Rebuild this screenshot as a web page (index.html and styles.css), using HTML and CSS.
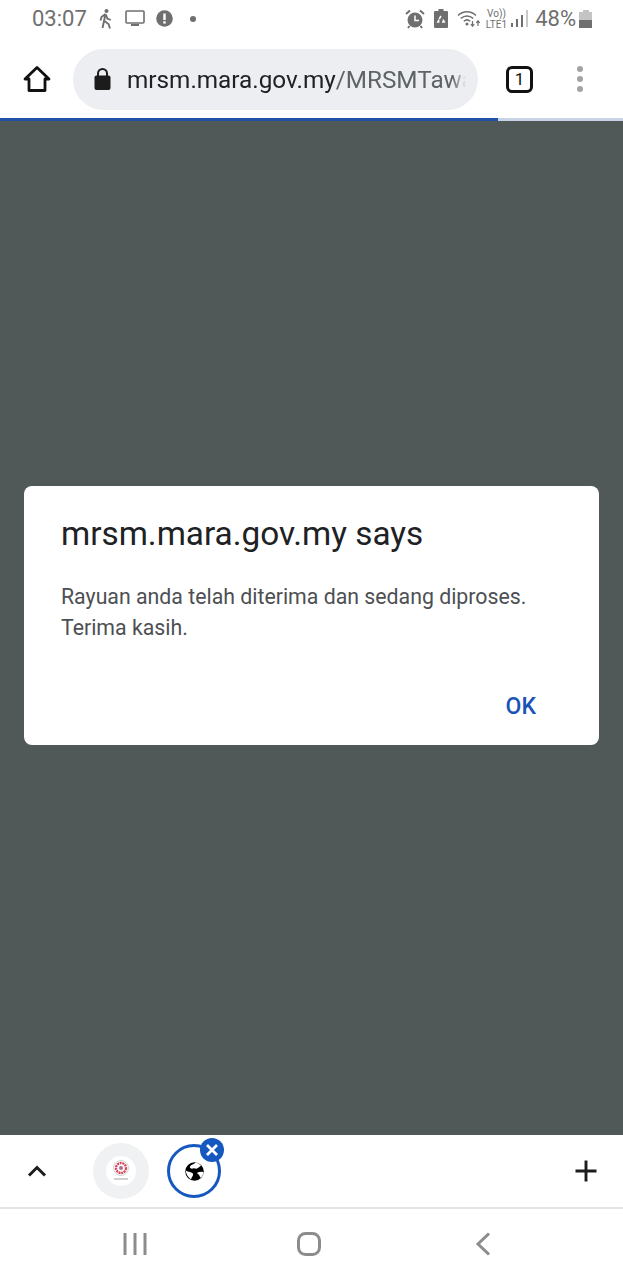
FILE: index.html
```html
<!DOCTYPE html>
<html lang="en">
<head>
  <meta charset="UTF-8">
  <title>mrsm.mara.gov.my</title>
  <link rel="stylesheet" href="styles.css">
</head>
<body>

  <div class="status">
    <div class="status-left">
      <span class="clock">03:07</span>
      <svg class="walk" width="16" height="22" viewBox="0 0 16 22"><circle cx="8.500" cy="3" r="2" fill="#6f6f6f"/><path d="M7.500 6 4.500 20M7.500 6l-4 3-1 3.500M7.800 6.500l1.500 4 3.500 1.500M6.500 13l4 3 1.500 4.500" fill="none" stroke="#6f6f6f" stroke-width="1.900"/></svg>
      <svg class="screen" width="20" height="17" viewBox="0 0 20 17"><rect x="1" y="1" width="18" height="12" rx="1" fill="none" stroke="#6f6f6f" stroke-width="1.600"/><rect x="6" y="14" width="8" height="2" fill="#6f6f6f"/></svg>
      <svg class="alert" width="17" height="17" viewBox="0 0 17 17"><circle cx="8.500" cy="8.500" r="8.300" fill="#6f6f6f"/><rect x="7.300" y="3.500" width="2.400" height="6.500" fill="#fff"/><rect x="7.300" y="11.200" width="2.400" height="2.400" fill="#fff"/></svg>
      <span class="dot"></span>
    </div>
    <div class="status-right">
      <svg width="20" height="20" viewBox="0 0 20 20"><circle cx="10" cy="11" r="7.500" fill="#6f6f6f"/><path d="M10 6.500V11.500H14" fill="none" stroke="#fff" stroke-width="1.500"/><path d="M1 5 5 1.500M19 5 15 1.500M4.500 17 3 19M15.500 17 17 19" stroke="#6f6f6f" stroke-width="2"/></svg>
      <svg class="saver" width="14" height="19" viewBox="0 0 14 19"><path d="M4.500 0h5v2H13a1 1 0 0 1 1 1v15a1 1 0 0 1-1 1H1a1 1 0 0 1-1-1V3a1 1 0 0 1 1-1h3.500z" fill="#6f6f6f"/><path d="M7 7 5.200 10M9 10.500l1.300 2.500H8M5.500 13H3.800l1.300-2.300" fill="none" stroke="#fff" stroke-width="1.500"/></svg>
      <svg class="wifi" width="25" height="19" viewBox="0 0 25 19"><path d="M1 6.500C6 1.500 14 1.500 19 6.500M3.800 9.500C7.500 6 12.500 6 16.200 9.500M6.800 12.300c2-1.800 4.400-1.800 6.400 0" fill="none" stroke="#6f6f6f" stroke-width="1.500"/><circle cx="10" cy="15" r="1.500" fill="#6f6f6f"/><path d="M15.500 12v5M13.800 15l1.700 2.200 1.700-2.200M21 17v-5M19.300 14l1.700-2.200 1.700 2.200" fill="none" stroke="#6f6f6f" stroke-width="1.200"/></svg>
      <span class="volte">Vo))<br>LTE1</span>
      <span class="signal">
        <i class="bar bar-1"></i>
        <i class="bar bar-2"></i>
        <i class="bar bar-3"></i>
        <i class="bar bar-4"></i>
      </span>
      <span class="percent">48%</span>
      <span class="battery"><i class="battery-cap"></i><i class="battery-body"><i class="battery-fill"></i></i></span>
    </div>
  </div>

  <div class="toolbar">
    <svg class="home" width="28" height="28" viewBox="0 0 28 28"><path d="M14 2.500 2 14h4v11.500h16V14h4z" fill="none" stroke="#111" stroke-width="2.800" stroke-linejoin="round"/></svg>
    <div class="omnibox">
      <svg class="lock" width="17" height="23" viewBox="0 0 17 23"><path d="M4 8V5.500a4.500 4.500 0 0 1 9 0V8" fill="none" stroke="#1c1c1c" stroke-width="2"/><rect x="0.500" y="7.500" width="16" height="14.500" rx="2" fill="#1c1c1c"/></svg>
      <span class="url"><span class="host">mrsm.mara.gov.my</span>/MRSMTawaran</span>
    </div>
    <div class="tab-count">1</div>
    <div class="menu"><i></i><i></i><i></i></div>
  </div>
  <div class="progress"><div class="progress-done"></div></div>

  <div class="scrim">
    <div class="dialog">
      <h1>mrsm.mara.gov.my says</h1>
      <p>Rayuan anda telah diterima dan sedang diproses.<br>Terima kasih.</p>
      <div class="actions"><button>OK</button></div>
    </div>
  </div>

  <div class="tabstrip">
    <svg class="chevron" width="20" height="12" viewBox="0 0 20 12"><path d="M2 10.500 10 2.500l8 8" fill="none" stroke="#1c1c1c" stroke-width="3"/></svg>
    <div class="tab tab-site">
      <span class="favicon">
        <svg width="20" height="22" viewBox="0 0 20 22"><circle cx="10" cy="8" r="7.500" fill="none" stroke="#d4d4d4" stroke-width="1"/><circle cx="10" cy="8" r="5" fill="none" stroke="#d8495f" stroke-width="2.400" stroke-dasharray="2 0.700"/><circle cx="10" cy="8" r="2" fill="#a8708c"/><rect x="3" y="18" width="14" height="2" fill="#d0d0d0"/></svg>
      </span>
    </div>
    <div class="tab tab-active">
      <svg width="19" height="19" viewBox="0 0 19 19"><circle cx="9.500" cy="9.500" r="9.300" fill="#000"/><path d="M10.500 0.500C9 2.500 6 2.500 5 4.500 4.200 6.200 6.500 7 8 6.500 9.500 6 10.800 7 12 6.500c1.800-.8 3-2 4-3-1.500-1.600-3.500-2.700-5.500-3zM0.600 8.500C1 12 3 15 6 17.500 6.500 15 8.500 14 8 12 7.500 10 3 10 .6 8.500zM12.500 10.500c1.800-.8 4.500-.8 6.100-.3-.3 2.500-1.400 4.300-3 5.600-1-1-1-2.500-2-3.300-.8-.7-1.800-1.500-1.100-2z" fill="#fff"/></svg>
      <span class="tab-close">
        <svg width="14" height="14" viewBox="0 0 14 14"><path d="M2 2l10 10M12 2 2 12" stroke="#fff" stroke-width="2.800"/></svg>
      </span>
    </div>
    <svg class="plus" width="22" height="22" viewBox="0 0 22 22"><path d="M11 0.500v21M0.500 11h21" stroke="#1c1c1c" stroke-width="2.900"/></svg>
  </div>

  <div class="navbar">
    <svg class="nav-recent" width="24" height="22" viewBox="0 0 24 22"><path d="M2 0v22M12 0v22M22 0v22" stroke="#8c8c8c" stroke-width="3"/></svg>
    <svg class="nav-home" width="24" height="24" viewBox="0 0 24 24"><rect x="1.500" y="1.500" width="21" height="21" rx="7" fill="none" stroke="#8c8c8c" stroke-width="3"/></svg>
    <svg class="nav-back" width="16" height="24" viewBox="0 0 16 24"><path d="M14 1.500 3 12l11 10.500" fill="none" stroke="#8c8c8c" stroke-width="3"/></svg>
  </div>

</body>
</html>
```

FILE: styles.css
```css
* {
  box-sizing: border-box;
}
html, body {
  margin: 0;
  height: 100%;
}
body {
  width: 623px;
  height: 1280px;
  overflow: hidden;
  display: flex;
  flex-direction: column;
  background: #fff;
  font-family: Roboto, Arial, sans-serif;
}
svg {
  display: block;
  flex: none;
}

/* status bar */
.status {
  height: 36px;
  flex: none;
  display: flex;
  justify-content: space-between;
  align-items: center;
  padding: 1px 31px 0 32px;
  color: #6f6f6f;
}
.status-left,
.status-right {
  display: flex;
  align-items: center;
}
.clock {
  font-size: 22px;
  margin-right: 11px;
}
.screen {
  margin-left: 11px;
}
.alert {
  margin-left: 11px;
}
.dot {
  width: 6px;
  height: 6px;
  border-radius: 50%;
  background: #6f6f6f;
  margin-left: 17px;
}
.saver {
  margin-left: 9px;
}
.wifi {
  margin-left: 9px;
}
.volte {
  font-size: 10px;
  line-height: 11px;
  margin-left: 4px;
  text-align: center;
}
.signal {
  display: flex;
  align-items: flex-end;
  gap: 3px;
  height: 17px;
  margin-left: 4px;
}
.bar {
  width: 2px;
  background: #6f6f6f;
}
.bar-1 { height: 4px; }
.bar-2 { height: 8px; }
.bar-3 { height: 12px; }
.bar-4 { height: 17px; background: #c8c8c8; }
.percent {
  font-size: 22px;
  margin-left: 7px;
}
.battery {
  display: flex;
  flex-direction: column;
  align-items: center;
  margin-left: 3px;
}
.battery-cap {
  width: 6px;
  height: 2px;
  background: #c4c4c4;
}
.battery-body {
  width: 13px;
  height: 16px;
  background: #c4c4c4;
  display: flex;
  align-items: flex-end;
}
.battery-fill {
  width: 100%;
  height: 8px;
  background: #6f6f6f;
}

/* browser toolbar */
.toolbar {
  height: 82px;
  flex: none;
  display: flex;
  align-items: center;
  padding: 4px 0 0 23px;
}
.omnibox {
  width: 405px;
  height: 61px;
  margin-left: 22px;
  padding: 0 12px 0 21px;
  border-radius: 31px;
  background: #eceef1;
  display: flex;
  align-items: center;
  overflow: hidden;
}
.url {
  margin-left: 16px;
  font-size: 24.300px;
  color: #5f6368;
  white-space: nowrap;
  overflow: hidden;
  -webkit-mask-image: linear-gradient(to right, #000 96%, transparent);
  mask-image: linear-gradient(to right, #000 96%, transparent);
}
.host {
  color: #202124;
}
.tab-count {
  width: 27px;
  height: 27px;
  margin-left: 28px;
  border: 3px solid #111;
  border-radius: 6px;
  font-size: 17px;
  color: #111;
  display: flex;
  align-items: center;
  justify-content: center;
}
.menu {
  margin-left: 44px;
  display: flex;
  flex-direction: column;
  gap: 4px;
}
.menu i {
  width: 6px;
  height: 6px;
  border-radius: 50%;
  background: #a3a3a3;
}
.progress {
  height: 3px;
  flex: none;
  background: #c9d3e6;
}
.progress-done {
  width: 498px;
  height: 100%;
  background: #1f52a5;
}

/* js alert */
.scrim {
  height: 1014px;
  flex: none;
  background: #505957;
  padding: 365px 24px 0;
}
.dialog {
  height: 259px;
  background: #fff;
  border-radius: 8px;
  padding: 27px 37px 0;
  display: flex;
  flex-direction: column;
}
.dialog h1 {
  margin: 0;
  font-size: 33.300px;
  line-height: 42px;
  font-weight: 400;
  color: #202124;
}
.dialog p {
  margin: 26px 0 0;
  font-size: 21.300px;
  line-height: 31px;
  color: #4d4f53;
}
.actions {
  margin-top: auto;
  padding-bottom: 23px;
  display: flex;
  justify-content: flex-end;
}
.actions button {
  border: 0;
  padding: 0;
  margin-right: 26px;
  background: none;
  font-family: inherit;
  font-size: 23px;
  line-height: 30px;
  font-weight: 500;
  color: #1a53b8;
}

/* tab strip */
.tabstrip {
  height: 72px;
  flex: none;
  display: flex;
  align-items: center;
  padding-left: 27px;
}
.tab {
  width: 54px;
  height: 54px;
  border-radius: 50%;
  display: flex;
  align-items: center;
  justify-content: center;
  position: relative;
}
.tab-site {
  margin-left: 46px;
  width: 56px;
  height: 56px;
  background: #f0f1f3;
}
.favicon {
  width: 30px;
  height: 30px;
  border-radius: 50%;
  background: #fff;
  display: flex;
  align-items: center;
  justify-content: center;
}
.tab-active {
  margin-left: 18px;
  border: 3px solid #1558c0;
}
.tab-close {
  position: absolute;
  top: -9px;
  right: -6px;
  width: 24px;
  height: 24px;
  border-radius: 50%;
  background: #1558c0;
  display: flex;
  align-items: center;
  justify-content: center;
}
.plus {
  margin-left: auto;
  margin-right: 26px;
}

/* android nav bar */
.navbar {
  flex: 1;
  border-top: 2px solid #e4e4e4;
  display: flex;
  align-items: center;
  padding: 0 0 2px 123px;
}
.nav-home {
  margin-left: 150px;
}
.nav-back {
  margin-left: 154px;
}
```
